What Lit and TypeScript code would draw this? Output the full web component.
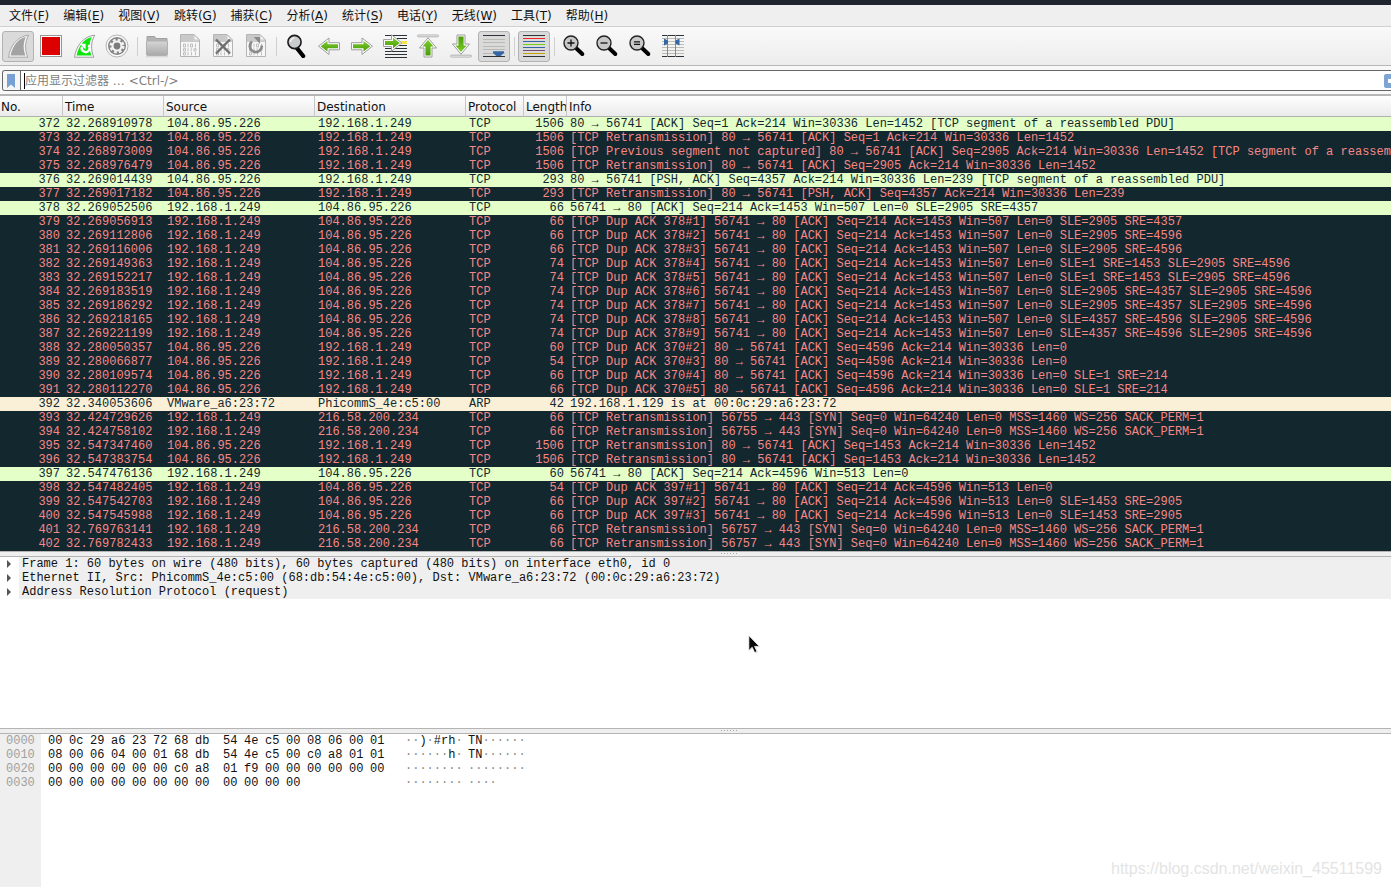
import { LitElement, html, css, svg, nothing, TemplateResult } from "lit";
import { customElement } from "lit/decorators.js";
import { classMap } from "lit/directives/class-map.js";

type Kind = "http" | "bad" | "arp";
type Packet = [no: number, time: string, src: string, dst: string, len: number, info: string, kind: Kind];

const SERVER = "104.86.95.226";
const HOST = "192.168.1.249";
const REMOTE = "216.58.200.234";
const SYN = "443 [SYN] Seq=0 Win=64240 Len=0 MSS=1460 WS=256 SACK_PERM=1";

const PACKETS: Packet[] = [
  [372, "32.268910978", SERVER, HOST, 1506, "80 → 56741 [ACK] Seq=1 Ack=214 Win=30336 Len=1452 [TCP segment of a reassembled PDU]", "http"],
  [373, "32.268917132", SERVER, HOST, 1506, "[TCP Retransmission] 80 → 56741 [ACK] Seq=1 Ack=214 Win=30336 Len=1452", "bad"],
  [374, "32.268973009", SERVER, HOST, 1506, "[TCP Previous segment not captured] 80 → 56741 [ACK] Seq=2905 Ack=214 Win=30336 Len=1452 [TCP segment of a reassembled PDU]", "bad"],
  [375, "32.268976479", SERVER, HOST, 1506, "[TCP Retransmission] 80 → 56741 [ACK] Seq=2905 Ack=214 Win=30336 Len=1452", "bad"],
  [376, "32.269014439", SERVER, HOST, 293, "80 → 56741 [PSH, ACK] Seq=4357 Ack=214 Win=30336 Len=239 [TCP segment of a reassembled PDU]", "http"],
  [377, "32.269017182", SERVER, HOST, 293, "[TCP Retransmission] 80 → 56741 [PSH, ACK] Seq=4357 Ack=214 Win=30336 Len=239", "bad"],
  [378, "32.269052506", HOST, SERVER, 66, "56741 → 80 [ACK] Seq=214 Ack=1453 Win=507 Len=0 SLE=2905 SRE=4357", "http"],
  [379, "32.269056913", HOST, SERVER, 66, "[TCP Dup ACK 378#1] 56741 → 80 [ACK] Seq=214 Ack=1453 Win=507 Len=0 SLE=2905 SRE=4357", "bad"],
  [380, "32.269112806", HOST, SERVER, 66, "[TCP Dup ACK 378#2] 56741 → 80 [ACK] Seq=214 Ack=1453 Win=507 Len=0 SLE=2905 SRE=4596", "bad"],
  [381, "32.269116006", HOST, SERVER, 66, "[TCP Dup ACK 378#3] 56741 → 80 [ACK] Seq=214 Ack=1453 Win=507 Len=0 SLE=2905 SRE=4596", "bad"],
  [382, "32.269149363", HOST, SERVER, 74, "[TCP Dup ACK 378#4] 56741 → 80 [ACK] Seq=214 Ack=1453 Win=507 Len=0 SLE=1 SRE=1453 SLE=2905 SRE=4596", "bad"],
  [383, "32.269152217", HOST, SERVER, 74, "[TCP Dup ACK 378#5] 56741 → 80 [ACK] Seq=214 Ack=1453 Win=507 Len=0 SLE=1 SRE=1453 SLE=2905 SRE=4596", "bad"],
  [384, "32.269183519", HOST, SERVER, 74, "[TCP Dup ACK 378#6] 56741 → 80 [ACK] Seq=214 Ack=1453 Win=507 Len=0 SLE=2905 SRE=4357 SLE=2905 SRE=4596", "bad"],
  [385, "32.269186292", HOST, SERVER, 74, "[TCP Dup ACK 378#7] 56741 → 80 [ACK] Seq=214 Ack=1453 Win=507 Len=0 SLE=2905 SRE=4357 SLE=2905 SRE=4596", "bad"],
  [386, "32.269218165", HOST, SERVER, 74, "[TCP Dup ACK 378#8] 56741 → 80 [ACK] Seq=214 Ack=1453 Win=507 Len=0 SLE=4357 SRE=4596 SLE=2905 SRE=4596", "bad"],
  [387, "32.269221199", HOST, SERVER, 74, "[TCP Dup ACK 378#9] 56741 → 80 [ACK] Seq=214 Ack=1453 Win=507 Len=0 SLE=4357 SRE=4596 SLE=2905 SRE=4596", "bad"],
  [388, "32.280050357", SERVER, HOST, 60, "[TCP Dup ACK 370#2] 80 → 56741 [ACK] Seq=4596 Ack=214 Win=30336 Len=0", "bad"],
  [389, "32.280066877", SERVER, HOST, 54, "[TCP Dup ACK 370#3] 80 → 56741 [ACK] Seq=4596 Ack=214 Win=30336 Len=0", "bad"],
  [390, "32.280109574", SERVER, HOST, 66, "[TCP Dup ACK 370#4] 80 → 56741 [ACK] Seq=4596 Ack=214 Win=30336 Len=0 SLE=1 SRE=214", "bad"],
  [391, "32.280112270", SERVER, HOST, 66, "[TCP Dup ACK 370#5] 80 → 56741 [ACK] Seq=4596 Ack=214 Win=30336 Len=0 SLE=1 SRE=214", "bad"],
  [392, "32.340053606", "VMware_a6:23:72", "PhicommS_4e:c5:00", 42, "192.168.1.129 is at 00:0c:29:a6:23:72", "arp"],
  [393, "32.424729626", HOST, REMOTE, 66, "[TCP Retransmission] 56755 → " + SYN, "bad"],
  [394, "32.424758102", HOST, REMOTE, 66, "[TCP Retransmission] 56755 → " + SYN, "bad"],
  [395, "32.547347460", SERVER, HOST, 1506, "[TCP Retransmission] 80 → 56741 [ACK] Seq=1453 Ack=214 Win=30336 Len=1452", "bad"],
  [396, "32.547383754", SERVER, HOST, 1506, "[TCP Retransmission] 80 → 56741 [ACK] Seq=1453 Ack=214 Win=30336 Len=1452", "bad"],
  [397, "32.547476136", HOST, SERVER, 60, "56741 → 80 [ACK] Seq=214 Ack=4596 Win=513 Len=0", "http"],
  [398, "32.547482405", HOST, SERVER, 54, "[TCP Dup ACK 397#1] 56741 → 80 [ACK] Seq=214 Ack=4596 Win=513 Len=0", "bad"],
  [399, "32.547542703", HOST, SERVER, 66, "[TCP Dup ACK 397#2] 56741 → 80 [ACK] Seq=214 Ack=4596 Win=513 Len=0 SLE=1453 SRE=2905", "bad"],
  [400, "32.547545988", HOST, SERVER, 66, "[TCP Dup ACK 397#3] 56741 → 80 [ACK] Seq=214 Ack=4596 Win=513 Len=0 SLE=1453 SRE=2905", "bad"],
  [401, "32.769763141", HOST, REMOTE, 66, "[TCP Retransmission] 56757 → " + SYN, "bad"],
  [402, "32.769782433", HOST, REMOTE, 66, "[TCP Retransmission] 56757 → " + SYN, "bad"],
];

const MENUS: [string, string][] = [
  ["文件", "F"], ["编辑", "E"], ["视图", "V"], ["跳转", "G"], ["捕获", "C"], ["分析", "A"],
  ["统计", "S"], ["电话", "Y"], ["无线", "W"], ["工具", "T"], ["帮助", "H"],
];

const DETAILS = [
  "Frame 1: 60 bytes on wire (480 bits), 60 bytes captured (480 bits) on interface eth0, id 0",
  "Ethernet II, Src: PhicommS_4e:c5:00 (68:db:54:4e:c5:00), Dst: VMware_a6:23:72 (00:0c:29:a6:23:72)",
  "Address Resolution Protocol (request)",
];

const DUMP: [string, string, string, string, string][] = [
  ["0000", "00 0c 29 a6 23 72 68 db", "54 4e c5 00 08 06 00 01", "··)·#rh·", "TN······"],
  ["0010", "08 00 06 04 00 01 68 db", "54 4e c5 00 c0 a8 01 01", "······h·", "TN······"],
  ["0020", "00 00 00 00 00 00 c0 a8", "01 f9 00 00 00 00 00 00", "········", "········"],
  ["0030", "00 00 00 00 00 00 00 00", "00 00 00 00", "········", "····"],
];

/* ---- toolbar drawings, all on a 24 by 24 grid ---- */

const FIN = "M2.5 23.2C4 12.5 11 2.2 22.7 1.2C18.8 8 18.6 15.5 21.8 23.2Z";
const FIN_INNER = "M4.6 21.6C6.3 12.8 11.8 4.8 19.8 3.1C17 9.2 17 15.6 19.5 21.6Z";

const fin = svg`
  <path d=${FIN} fill="#f4f4f4" stroke="#a8a8a8" stroke-width="1"/>
  <path d=${FIN_INNER} fill="#a3a3a3"/>`;

const stop = svg`
  <rect x="1.5" y="1.5" width="21" height="21" fill="#fff" stroke="#969696"/>
  <rect x="3" y="3" width="18" height="18" fill="#dc0000"/>`;

const restart = svg`
  <path d=${FIN} fill="#fff" stroke="#9c9c9c" stroke-width="1"/>
  <path d=${FIN_INNER} fill="#0be60b"/>
  <path d="M10.1 12.6A3.9 3.9 0 1 0 16.3 11.2" fill="none" stroke="#fff" stroke-width="2.4"/>
  <path d="M7.8 9.8H13.6V15.4Z" fill="#fff"/>`;

const gear = svg`
  <circle cx="12" cy="12" r="11" fill="#fafafa" stroke="#b4b4b4"/>
  <circle cx="12" cy="12" r="9" fill="#858585"/>
  <circle cx="12" cy="12" r="6.3" fill="none" stroke="#f2f2f2" stroke-width="2.4" stroke-dasharray="2.8 2.148"/>
  <circle cx="12" cy="12" r="5.6" fill="#f2f2f2"/>
  <circle cx="12" cy="12" r="3.4" fill="#7c7c7c"/>`;

const folder = svg`
  <path d="M2 2.5H9.5L11 4.5H22V9H2Z" fill="#b4b4b4" stroke="#a0a0a0"/>
  <rect x="1.5" y="7" width="21" height="14.5" rx="1" fill="url(#gFolder)" stroke="#b0b0b0"/>
  <path d="M1 22.8H23" stroke="#cfcfcf"/>`;

const sheet = svg`
  <path d="M2.5 .5H16L21.5 6V22.5H2.5Z" fill="#f7f7f7" stroke="#b4b4b4"/>
  <path d="M3 1H15.5V6.5H21V8H3Z" fill="#c9c9c9"/>
  <path d="M16 .8V6H21.3Z" fill="#f7f7f7" stroke="#b0b0b0" stroke-width=".7"/>
  <g fill="none" stroke="#b8b8b8" stroke-width=".9">
    <path d="M5.5 10H7.5V13H5.5ZM10 9.6V13.4M12.5 10H14.5V13H12.5ZM17.5 9.6V13.4" />
    <path d="M5.5 14.6H7.5V17H5.5ZM10 14.2V17.4M13.2 14.2V17.4M16 14.6H18V17H16Z" />
    <path d="M5.5 18.6H7.5V21H5.5ZM10 18.2V21.4M13.5 18.2V21.4M17.5 18.2V21.4" />
  </g>`;

const closeFile = svg`${sheet}
  <path d="M5 5.5L19 19.5M19 5.5L5 19.5" stroke="#6f6f6f" stroke-width="2.4"/>`;

const reload = svg`${sheet}
  <path d="M8 7.4A6 6 0 1 0 17.8 11.5" fill="none" stroke="#8a8a8a" stroke-width="2.6"/>
  <path d="M9.8 3H16V10Z" fill="#8a8a8a"/>`;

const find = svg`
  <path d="M13.2 14.5L19.2 22" stroke="#000" stroke-width="4.2" stroke-linecap="round"/>
  <circle cx="10.5" cy="8" r="6.6" fill="#c9cccd" stroke="#1c1c1c" stroke-width="1.6"/>
  <path d="M6.6 8A4 4 0 0 1 10.5 4" fill="none" stroke="#f5f5f5" stroke-width="1.6"/>`;

const ARROW_R = "M1.5 8.7H12V4L22.5 12.2L12 20.5V15.8H1.5Z";
const ARROW_R_IN = "M3 10.2H13.5V7L20.4 12.2L13.5 17.5V14.3H3Z";

const arrowRight = svg`
  <path d=${ARROW_R} fill="#fff" stroke="#9d9d9d"/>
  <path d=${ARROW_R_IN} fill="url(#gGreen)"/>`;

const arrowLeft = svg`<g transform="matrix(-1 0 0 1 24 0)">${arrowRight}</g>`;

const goTo = svg`
  <path d="M2 1.5H24M2 17.5H24M2 20.5H24M2 23.5H24M2 14.5H24" stroke="#2c3236" stroke-width="1"/>
  <path d="M14 4.5H24M14 11.5H24" stroke="#2c3236" stroke-width="1"/>
  <rect x="17" y="7" width="7" height="3" fill="#f7e14c"/>
  <path d="M.5 5.6H8.5V.8L18.8 9L8.5 17.2V12.5H.5Z" fill="#fff" stroke="#9d9d9d"/>
  <path d="M2 7H10V3.8L16.8 9L10 14.2V11H2Z" fill="url(#gGreen)"/>`;

const toTop = svg`
  <rect x="1.5" y="1" width="21" height="1.8" rx=".9" fill="#fff" stroke="#a4a4a4" stroke-width=".9"/>
  <path d="M12 3.8L20.5 14H16V23H8V14H3.5Z" fill="#fff" stroke="#9d9d9d"/>
  <path d="M12 6L17.6 12.6H14.6V21.6H9.4V12.6H6.4Z" fill="url(#gGreen)"/>`;

const toBottom = svg`<g transform="matrix(1 0 0 -1 0 24)">${toTop}</g>`;

const autoScroll = svg`
  <path d="M1 1.5H23M1 22.5H23" stroke="#2c3236" stroke-width="1"/>
  <path d="M1 5.5H23M1 8.5H23M1 12.5H23M1 15.5H23M1 19.5H23" stroke="#b9bab4" stroke-width="1"/>
  <path d="M11 17.2H22V19L18.5 22H14.5L11 19Z" fill="#3465a4"/>`;

const LINES: [number, string][] = [
  [1.5, "#2c3236"], [4.5, "#ef2929"], [7.5, "#3465a4"], [10.5, "#73d216"],
  [13.5, "#3465a4"], [16.5, "#75507b"], [19.5, "#c4a000"], [22.5, "#2c3236"],
];
const colorize = svg`${LINES.map(([y, c]) => svg`<path d="M1 ${y}H23" stroke=${c} stroke-width="1"/>`)}`;

const zoomBase = svg`
  <path d="M14.5 14.5L20.3 20" stroke="#000" stroke-width="4" stroke-linecap="round"/>
  <circle cx="9" cy="9" r="7" fill="#c8c8c8" stroke="#222" stroke-width="1.4"/>`;
const zoomIn = svg`${zoomBase}<path d="M5.5 9H12.5M9 5.5V12.5" stroke="#111" stroke-width="1.3"/>`;
const zoomOut = svg`${zoomBase}<path d="M5.5 9H12.5" stroke="#111" stroke-width="1.3"/>`;
const zoomFit = svg`${zoomBase}<path d="M6 7.8H12M6 10.4H12" stroke="#111" stroke-width="1.2"/>`;

const columns = svg`
  <path d="M1 1.5H23M1 22.5H23" stroke="#2c3236" stroke-width="1"/>
  <path d="M1 4.5H23M1 7.5H23M1 10.5H23M1 13.5H23M1 16.5H23M1 19.5H23" stroke="#babdb6" stroke-width="1"/>
  <path d="M6.5 1V23M14.5 1V23" stroke="#888a85" stroke-width="1"/>
  <path d="M3 4.5L7 6.5V9.5L3 11.5ZM18.5 4.5L14.5 6.5V9.5L18.5 11.5Z" fill="#3465a4"/>`;

type Tool = { label: string; icon: TemplateResult | ReturnType<typeof svg>; on?: boolean } | null;

const TOOLS: Tool[] = [
  { label: "开始捕获分组", icon: fin, on: true },
  { label: "停止捕获分组", icon: stop },
  { label: "重新开始当前捕获", icon: restart },
  { label: "捕获选项", icon: gear },
  null,
  { label: "打开", icon: folder },
  { label: "保存", icon: sheet },
  { label: "关闭", icon: closeFile },
  { label: "重新加载", icon: reload },
  null,
  { label: "查找分组", icon: find },
  { label: "上一分组", icon: arrowLeft },
  { label: "下一分组", icon: arrowRight },
  { label: "转到分组", icon: goTo },
  { label: "首个分组", icon: toTop },
  { label: "最新分组", icon: toBottom },
  { label: "自动滚动", icon: autoScroll, on: true },
  null,
  { label: "着色", icon: colorize, on: true },
  null,
  { label: "放大", icon: zoomIn },
  { label: "缩小", icon: zoomOut },
  { label: "普通大小", icon: zoomFit },
  { label: "调整列宽", icon: columns },
];

@customElement("main-toolbar")
export class MainToolbar extends LitElement {
  static styles = css`
    :host {
      display: flex;
      gap: 1px;
      padding: 4px 2px 3px;
      border-top: 1px solid #d0d0d0;
      border-bottom: 1px solid #b8b8b8;
      background: linear-gradient(#f9f9f9, #ededed);
    }
    .tool {
      flex: none;
      box-sizing: border-box;
      width: 32px;
      height: 31px;
      margin: 0;
      padding: 2px 3px 3px;
      border: 1px solid transparent;
      border-radius: 3px;
      background: none;
    }
    .tool.on {
      background: #dadada;
      border-color: #b2b2b2;
    }
    .icon {
      display: block;
      width: 24px;
      height: 24px;
    }
    .sep {
      flex: none;
      width: 1px;
      height: 19px;
      margin: 6px 2px 0 3px;
      background: #cfcfcf;
    }
  `;

  render() {
    return TOOLS.map((t) =>
      t === null
        ? html`<span class="sep"></span>`
        : html`<button class=${classMap({ tool: true, on: !!t.on })} aria-label=${t.label}>
            <svg class="icon" viewBox="0 0 24 24" aria-hidden="true">
              <defs>
                <linearGradient id="gGreen" x1="0" y1="0" x2="0" y2="1">
                  <stop offset="0" stop-color="#7ccc2c" />
                  <stop offset="1" stop-color="#4a9c08" />
                </linearGradient>
                <linearGradient id="gFolder" x1="0" y1="0" x2="0" y2="1">
                  <stop offset="0" stop-color="#d6d6d6" />
                  <stop offset="1" stop-color="#a9a9a9" />
                </linearGradient>
              </defs>
              ${t.icon}
            </svg>
          </button>`
    );
  }
}

@customElement("filter-bar")
export class FilterBar extends LitElement {
  static styles = css`
    :host {
      display: block;
      padding: 4px 0 3px 2px;
      overflow: hidden;
      background: #f8f8f8;
      border-bottom: 2px solid #b6b6b6;
    }
    .box {
      display: flex;
      align-items: center;
      box-sizing: border-box;
      height: 21px;
      border: 1px solid #666;
      border-right: 0;
      border-radius: 3px 0 0 3px;
      background: #fff;
    }
    .mark {
      flex: none;
      display: block;
      width: 18px;
      height: 19px;
      margin: 0;
      padding: 0 1px 0 0;
      border: 0;
      border-right: 1px solid #666;
      background: #f6f6f6;
      border-radius: 2px 0 0 2px;
    }
    .flag {
      display: block;
      margin: 0 auto;
    }
    .caret {
      flex: none;
      width: 1px;
      height: 16px;
      margin-left: 3px;
      background: #000;
    }
    .text {
      flex: 1;
      min-width: 0;
      height: 19px;
      margin: 0;
      padding: 0;
      border: 0;
      outline: 0;
      background: none;
      font: inherit;
      color: #222;
    }
    .text::placeholder {
      color: #808080;
      opacity: 1;
    }
    .apply {
      flex: none;
      width: 24px;
      height: 14px;
      margin: 0 -17px 0 0;
      padding: 4px;
      border: 0;
      border-radius: 2px;
      background: #7fa5d3;
    }
    .arrow {
      display: block;
    }
  `;

  render() {
    return html`<div class="box">
      <button class="mark" aria-label="书签">
        <svg class="flag" width="8" height="14" viewBox="0 0 8 14" aria-hidden="true">
          <path d="M0 0H8V14L4 10.5L0 14Z" fill="#78a0d2" />
        </svg>
      </button>
      <span class="caret"></span>
      <input class="text" type="text" aria-label="显示过滤器" placeholder="应用显示过滤器 … <Ctrl-/>" />
      <button class="apply" aria-label="应用">
        <svg class="arrow" width="16" height="6" viewBox="0 0 16 6" aria-hidden="true">
          <path d="M0 1H10V0L16 3L10 6V5H0Z" fill="#fff" />
        </svg>
      </button>
    </div>`;
  }
}

@customElement("packet-list")
export class PacketList extends LitElement {
  static styles = css`
    :host {
      display: block;
      overflow: hidden;
    }
    .list {
      width: 100%;
      table-layout: fixed;
      border-collapse: separate;
      border-spacing: 0;
    }
    .c-no { width: 63px; }
    .c-time { width: 101px; }
    .c-addr { width: 151px; }
    .c-proto { width: 58px; }
    .c-len { width: 43px; }
    .head {
      height: 18px;
      padding: 2px 0 0 2px;
      border-right: 1px solid #c6c6c6;
      border-bottom: 1px solid #b0b0b0;
      background: linear-gradient(#fefefe, #ebebeb);
      font: 12px/18px "DejaVu Sans", "Noto Sans CJK SC", sans-serif;
      text-align: left;
      white-space: nowrap;
      overflow: hidden;
      color: #111;
    }
    .head:first-child { padding-left: 1px; }
    .head:last-child { border-right: 0; }
    .cell {
      height: 14px;
      padding: 0 3px;
      font: 12px/14px "Liberation Mono", monospace;
      white-space: pre;
      overflow: hidden;
    }
    .num { text-align: right; }
    .http { background: #e4ffc7; color: #12272e; }
    .bad { background: #12272e; color: #f78787; }
    .arp { background: #faf0d7; color: #12272e; }
  `;

  render() {
    return html`<table class="list">
      <colgroup>
        <col class="c-no" /><col class="c-time" /><col class="c-addr" /><col class="c-addr" />
        <col class="c-proto" /><col class="c-len" /><col />
      </colgroup>
      <thead>
        <tr>
          ${["No.", "Time", "Source", "Destination", "Protocol", "Length", "Info"].map(
            (h) => html`<th class="head" scope="col">${h}</th>`
          )}
        </tr>
      </thead>
      <tbody>
        ${PACKETS.map(
          ([no, time, src, dst, len, info, kind]) => html`<tr class=${kind}>
            <td class="cell num">${no}</td>
            <td class="cell">${time}</td>
            <td class="cell">${src}</td>
            <td class="cell">${dst}</td>
            <td class="cell">${kind === "arp" ? "ARP" : "TCP"}</td>
            <td class="cell num">${len}</td>
            <td class="cell">${info}</td>
          </tr>`
        )}
      </tbody>
    </table>`;
  }
}

@customElement("packet-details")
export class PacketDetails extends LitElement {
  static styles = css`
    :host {
      display: block;
      background: #fff;
      overflow: hidden;
    }
    .row {
      display: flex;
      align-items: center;
      height: 14px;
    }
    .toggle {
      flex: none;
      width: 19px;
      height: 14px;
      margin: 0;
      padding: 0 0 0 7px;
      border: 0;
      background: none;
    }
    .tri { display: block; }
    .label {
      flex: 1;
      padding-left: 3px;
      background: #efefef;
      font: 12px/14px "Liberation Mono", monospace;
      white-space: pre;
      color: #111;
    }
  `;

  render() {
    return DETAILS.map(
      (d) => html`<div class="row">
        <button class="toggle" aria-label="展开">
          <svg class="tri" width="4" height="8" viewBox="0 0 4 8" aria-hidden="true">
            <path d="M0 0L4 4L0 8Z" fill="#555" />
          </svg>
        </button>
        <span class="label">${d}</span>
      </div>`
    );
  }
}

@customElement("byte-view")
export class ByteView extends LitElement {
  static styles = css`
    :host {
      display: flex;
      background: #fff;
      font: 12px/14px "Liberation Mono", monospace;
      color: #111;
      overflow: hidden;
    }
    .offsets {
      flex: none;
      box-sizing: border-box;
      width: 41px;
      padding-left: 6px;
      background: #efefef;
      color: #a0a0a0;
    }
    .rows { padding-left: 7px; }
    .row {
      display: grid;
      grid-template-columns: repeat(8, 21px) 7px repeat(8, 21px) 14px 63px 63px;
      height: 14px;
      white-space: pre;
    }
    .second { grid-column-start: 10; }
    .ascii { grid-column-start: 19; }
    .dim { color: #8c8c8c; }
  `;

  private ascii(text: string) {
    return text
      .split(/(·+)/)
      .map((part) => (part.startsWith("·") ? html`<span class="dim">${part}</span>` : part || nothing));
  }

  render() {
    return html`
      <div class="offsets">${DUMP.map(([o]) => html`<div>${o}</div>`)}</div>
      <div class="rows">
        ${DUMP.map(
          ([, a, b, left, right]) => html`<div class="row">
            ${a.split(" ").map((x) => html`<span>${x}</span>`)}
            ${b.split(" ").map((x, i) => html`<span class=${i === 0 ? "second" : "byte"}>${x}</span>`)}
            <span class="ascii">${this.ascii(left)}</span>
            <span>${this.ascii(right)}</span>
          </div>`
        )}
      </div>
    `;
  }
}

@customElement("app-root")
export class AppRoot extends LitElement {
  static styles = css`
    :host {
      position: relative;
      display: flex;
      flex-direction: column;
      height: 100vh;
      overflow: hidden;
      background: #efefef;
      font: 12px/20px "DejaVu Sans", "Noto Sans CJK SC", sans-serif;
      color: #111;
    }
    .title {
      flex: none;
      height: 5px;
      background: #20242f;
    }
    .menu {
      flex: none;
      display: flex;
      gap: 14px;
      padding: 2px 0 0 9px;
      background: #efefef;
    }
    .item {
      height: 19px;
      margin: 0;
      padding: 0;
      border: 0;
      background: none;
      font: inherit;
      line-height: 19px;
      color: inherit;
      white-space: nowrap;
    }
    .key {
      text-decoration: underline;
      text-underline-offset: 2px;
    }
    .toolbar, .filter, .packets { flex: none; }
    .splitter {
      flex: none;
      display: flex;
      justify-content: center;
      gap: 2px;
      height: 4px;
      padding-left: 66px;
      border-top: 1px solid #b4b4b4;
      border-bottom: 1px solid #b4b4b4;
      background: #efefef;
    }
    .dot {
      width: 1px;
      height: 1px;
      margin-top: 1px;
      background: #a8a8a8;
    }
    .details {
      flex: 19 1 0;
      min-height: 0;
    }
    .bytes {
      flex: 17 1 0;
      min-height: 0;
    }
    .pointer {
      position: absolute;
      left: 748px;
      top: 635px;
    }
    .mark {
      position: absolute;
      right: 9px;
      bottom: 8px;
      font: 16px/20px "Liberation Sans", sans-serif;
      color: #e4e4e4;
    }
  `;

  private splitter() {
    return html`<div class="splitter" role="separator">
      ${[0, 1, 2, 3, 4, 5].map(() => html`<span class="dot"></span>`)}
    </div>`;
  }

  render() {
    return html`
      <div class="title"></div>
      <nav class="menu">
        ${MENUS.map(([name, key]) => html`<button class="item">${name}(<span class="key">${key}</span>)</button>`)}
      </nav>
      <main-toolbar class="toolbar"></main-toolbar>
      <filter-bar class="filter"></filter-bar>
      <packet-list class="packets"></packet-list>
      ${this.splitter()}
      <packet-details class="details"></packet-details>
      ${this.splitter()}
      <byte-view class="bytes"></byte-view>
      <svg class="pointer" width="14" height="20" viewBox="0 0 14 20" aria-hidden="true">
        <path d="M1.5 1.5V16L5 12.8L7.5 18.2L10 17L7.6 12H12.5Z" fill="#bbb" opacity=".6" />
        <path d="M.8 .5V15.5L4.2 12.3L6.6 17.6L9 16.5L6.6 11.4H11.4Z" fill="#0a0a0a" stroke="#fff" stroke-width=".8" />
      </svg>
      <span class="mark">https://blog.csdn.net/weixin_45511599</span>
    `;
  }
}
